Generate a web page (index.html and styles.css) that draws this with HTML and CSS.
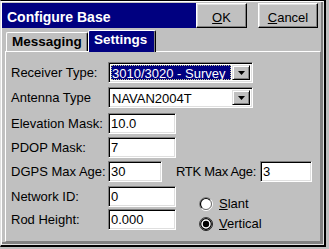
FILE: index.html
```html
<!DOCTYPE html>
<html>
<head>
<meta charset="utf-8">
<link rel="stylesheet" href="styles.css">
</head>
<body>
<div class="window">
  <div class="frame">
    <div class="inner">
      <div class="titlebar">
        <div class="title">Configure Base</div>
        <div class="btn ok"><u>O</u>K</div>
        <div class="btn cancel"><u>C</u>ancel</div>
      </div>
      <div class="tabs">
        <div class="tab messaging">Messaging</div>
        <div class="tab settings active">Settings</div>
      </div>
      <div class="panel">
        <div class="form">
          <div class="lbl">Receiver Type:</div>
          <div class="combo">
            <span class="combo-text sel">3010/3020 - Survey</span>
            <span class="drop"><svg width="7" height="4" viewBox="0 0 7 4"><polygon points="0,0 7,0 3.5,4" fill="#000"/></svg></span>
          </div>

          <div class="lbl">Antenna Type</div>
          <div class="combo">
            <span class="combo-text">NAVAN2004T</span>
            <span class="drop"><svg width="7" height="4" viewBox="0 0 7 4"><polygon points="0,0 7,0 3.5,4" fill="#000"/></svg></span>
          </div>

          <div class="lbl">Elevation Mask:</div>
          <div class="field">10.0</div>
          <div class="empty"></div>

          <div class="lbl">PDOP Mask:</div>
          <div class="field">7</div>
          <div class="empty"></div>

          <div class="lbl">DGPS Max Age:</div>
          <div class="field narrow">30</div>
          <div class="rtk">
            <div class="lbl rtk-lbl">RTK Max Age:</div>
            <div class="field rtk-field">3</div>
          </div>

          <div class="lbl">Network ID:</div>
          <div class="field">0</div>
          <div class="radios">
            <div class="radio">
              <svg width="14" height="14" viewBox="0 0 14 14">
                <circle cx="7" cy="7" r="6" fill="#fff"/>
                <path d="M2.4 11.6 A6.5 6.5 0 0 1 11.6 2.4" fill="none" stroke="#808080" stroke-width="1"/>
                <path d="M11.6 2.4 A6.5 6.5 0 0 1 2.4 11.6" fill="none" stroke="#fff" stroke-width="1"/>
                <path d="M3.1 10.9 A5.5 5.5 0 0 1 10.9 3.1" fill="none" stroke="#000" stroke-width="1.2"/>
                <path d="M10.9 3.1 A5.5 5.5 0 0 1 3.1 10.9" fill="none" stroke="#404040" stroke-width="0.8"/>
              </svg>
              <span><u>S</u>lant</span>
            </div>
            <div class="radio">
              <svg width="14" height="14" viewBox="0 0 14 14">
                <circle cx="7" cy="7" r="6" fill="#fff"/>
                <path d="M2.4 11.6 A6.5 6.5 0 0 1 11.6 2.4" fill="none" stroke="#404040" stroke-width="1"/>
                <path d="M11.6 2.4 A6.5 6.5 0 0 1 2.4 11.6" fill="none" stroke="#202020" stroke-width="1"/>
                <circle cx="7" cy="7" r="5.3" fill="none" stroke="#000" stroke-width="1.2"/>
                <circle cx="7" cy="7" r="3.2" fill="#000"/>
              </svg>
              <span><u>V</u>ertical</span>
            </div>
          </div>

          <div class="lbl">Rod Height:</div>
          <div class="field">0.000</div>
        </div>
      </div>
    </div>
  </div>
</div>
</body>
</html>
```

FILE: styles.css
```css
* { box-sizing: border-box; }

body {
  margin: 0;
  width: 329px;
  height: 249px;
  overflow: hidden;
  background: #c0c0c0;
  font-family: "Liberation Sans", Arial, sans-serif;
  font-size: 13px;
  color: #000;
}

.window {
  width: 326px;
  height: 247px;
  border-top: 1px solid #000;
  border-left: 1px solid #dfdfdf;
  border-right: 2px solid #000;
  border-bottom: 2px solid #000;
}

.frame {
  height: 100%;
  border-top: 1px solid #fff;
  border-left: 1px solid #fff;
  border-right: 1px solid #dfdfdf;
  border-bottom: 1px solid #dfdfdf;
}

.inner {
  height: 100%;
  border-right: 2px solid #808080;
  border-bottom: 2px solid #808080;
  padding-top: 1px;
  display: flex;
  flex-direction: column;
}

.titlebar {
  display: flex;
  height: 25px;
  flex: none;
}

.title {
  width: 194px;
  background: #000080;
  color: #fff;
  font-weight: bold;
  font-size: 14px;
  line-height: 22px;
  padding: 3px 0 0 5px;
  white-space: nowrap;
}

.btn {
  height: 25px;
  border: 1px solid;
  border-color: #fff #000 #000 #fff;
  box-shadow: inset -1px -1px #808080, inset 1px 1px #dfdfdf;
  display: flex;
  align-items: center;
  justify-content: center;
  padding-top: 3px;
  font-size: 13px;
}

.ok { width: 51px; }
.cancel { width: 60px; margin-left: 11px; }

.tabs {
  display: flex;
  align-items: flex-end;
  height: 23px;
  padding-left: 4px;
  flex: none;
  position: relative;
  z-index: 1;
}

.tab {
  height: 19px;
  border: 1px solid;
  border-bottom: none;
  border-color: #fff #000 transparent #fff;
  box-shadow: inset -1px 0 #808080;
  border-radius: 2px 2px 0 0;
  font-weight: bold;
  font-size: 13.5px;
  line-height: 17px;
  padding: 0 0 0 5px;
  white-space: nowrap;
}

.messaging { width: 82px; }

.settings { width: 68px; }

.tab.active {
  height: 22px;
  margin-bottom: -1px;
  background: #000080;
  color: #fff;
}

.panel {
  flex: 1;
  margin-left: 3px;
  border-top: 1px solid #fff;
  border-left: 1px solid #fff;
  border-right: 1px solid #808080;
  border-bottom: 1px solid #808080;
  padding-top: 10px;
}

.form {
  display: grid;
  grid-template-columns: 102px 68px 1fr;
  grid-template-rows: 25px 26px 24px 24px 25px 23px 21px;
  align-items: start;
}

.lbl {
  padding-left: 5px;
  height: 21px;
  line-height: 21px;
  white-space: nowrap;
}

.field {
  width: 68px;
  height: 21px;
  background: #fff;
  border: 1px solid;
  border-color: #808080 #fff #fff #808080;
  box-shadow: inset 1px 1px #000, inset -1px -1px #dfdfdf;
  padding: 0 2px;
  line-height: 19px;
  white-space: nowrap;
  overflow: hidden;
}

.field.narrow { width: 54px; }

.combo {
  grid-column: 2 / span 2;
  width: 145px;
  height: 21px;
  display: flex;
  gap: 1px;
  padding: 2px;
  background: #fff;
  border: 1px solid;
  border-color: #808080 #fff #fff #808080;
  box-shadow: inset 1px 1px #000, inset -1px -1px #dfdfdf;
}

.combo-text {
  flex: 1;
  line-height: 17px;
  padding-left: 1px;
  white-space: nowrap;
  overflow: hidden;
}

.combo-text.sel {
  background: #000080;
  color: #fff;
  outline: 1px dotted #c8c890;
  outline-offset: -1px;
}

.drop {
  width: 18px;
  flex: none;
  background: #c0c0c0;
  border: 1px solid;
  border-color: #dfdfdf #000 #000 #dfdfdf;
  box-shadow: inset 1px 1px #fff, inset -1px -1px #808080;
  display: flex;
  align-items: center;
  justify-content: center;
}

.drop svg { display: block; }

.rtk {
  display: grid;
  grid-template-columns: 84px 52px;
}

.rtk-lbl { padding-left: 0; letter-spacing: -0.3px; }

.rtk-field { width: 52px; }

.radios {
  grid-column: 3;
  grid-row: 6 / span 2;
  padding: 11px 0 0 23px;
  display: flex;
  flex-direction: column;
  gap: 6px;
}

.radio {
  display: flex;
  align-items: center;
  gap: 6px;
  height: 14px;
  line-height: 14px;
}

.radio svg { display: block; flex: none; }
```
